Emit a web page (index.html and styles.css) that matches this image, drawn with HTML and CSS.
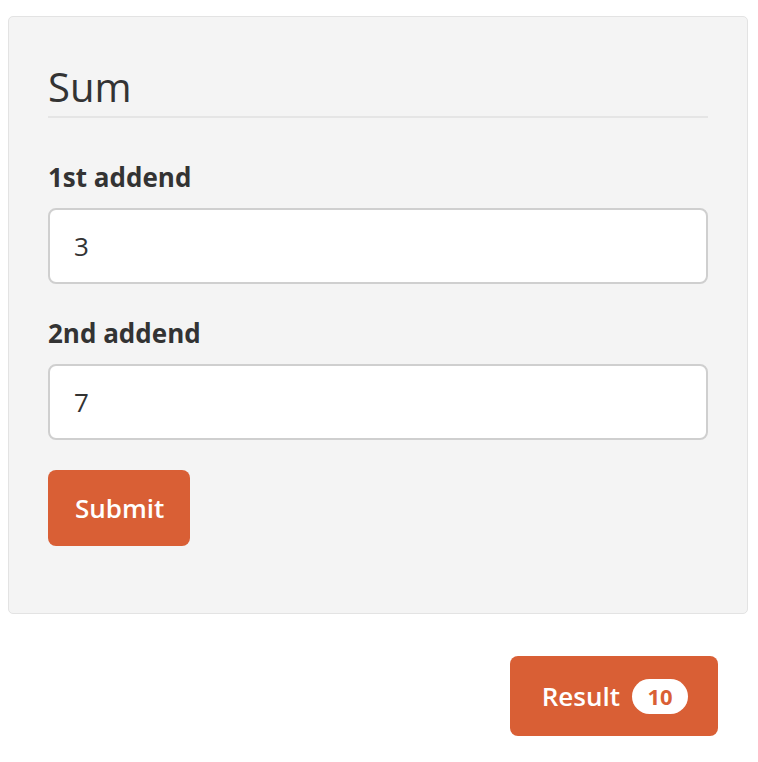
FILE: index.html
```html
<!DOCTYPE html>
<html>
<head>
<meta charset="utf-8">
<link rel="stylesheet" href="styles.css">
</head>
<body>
<div class="well">
  <form class="form">
    <legend class="legend">Sum</legend>
    <div class="group">
      <label class="label">1st addend</label>
      <input class="input" type="text" value="3">
    </div>
    <div class="group">
      <label class="label">2nd addend</label>
      <input class="input" type="text" value="7">
    </div>
    <button class="btn" type="button">Submit</button>
  </form>
</div>
<div class="result-row">
  <button class="btn btn-result" type="button">Result <span class="badge">10</span></button>
</div>
</body>
</html>
```
FILE: styles.css
```css
* { box-sizing: border-box; }
html, body { margin: 0; padding: 0; background: #fff; }
body {
  font-family: "Open Sans", "Noto Sans", sans-serif;
  color: #333;
  padding: 16px 10px 0 8px;
}
.well {
  background: #f4f4f4;
  border: 1px solid #e3e3e3;
  border-radius: 5px;
  padding: 40px 39px 67px 39px;
  height: 598px;
}
.form { margin: 0; display: block; }
.legend {
  display: block;
  width: 100%;
  padding: 0;
  margin: 0 0 40px 0;
  font-size: 40px;
  line-height: 59px;
  font-weight: 400;
  color: #333;
  border-bottom: 2px solid #e5e5e5;
}
.group { margin-bottom: 30px; }
.label {
  display: block;
  font-size: 26px;
  font-weight: 700;
  line-height: 39px;
  margin-bottom: 11px;
}
.input {
  display: block;
  width: 100%;
  height: 76px;
  padding: 0 24px;
  font-family: inherit;
  font-size: 26px;
  font-weight: 500;
  color: #333;
  background: #fff;
  border: 2px solid #cfcfcf;
  border-radius: 8px;
  outline: none;
}
.btn {
  display: inline-flex;
  align-items: center;
  height: 76px;
  padding: 0 26px 0 27px;
  font-family: inherit;
  font-size: 26px;
  font-weight: 600;
  color: #fff;
  background: #d95f35;
  border: none;
  border-radius: 8px;
}
.result-row {
  display: flex;
  justify-content: flex-end;
  padding-right: 30px;
  margin-top: 42px;
}
.btn-result {
  height: 80px;
  padding: 0 30px 0 32px;
}
.badge {
  display: inline-flex;
  align-items: center;
  justify-content: center;
  margin-left: 12px;
  width: 56px;
  height: 35px;
  border-radius: 18px;
  background: #fff;
  color: #d95f35;
  font-size: 22px;
  font-weight: 700;
}
```
